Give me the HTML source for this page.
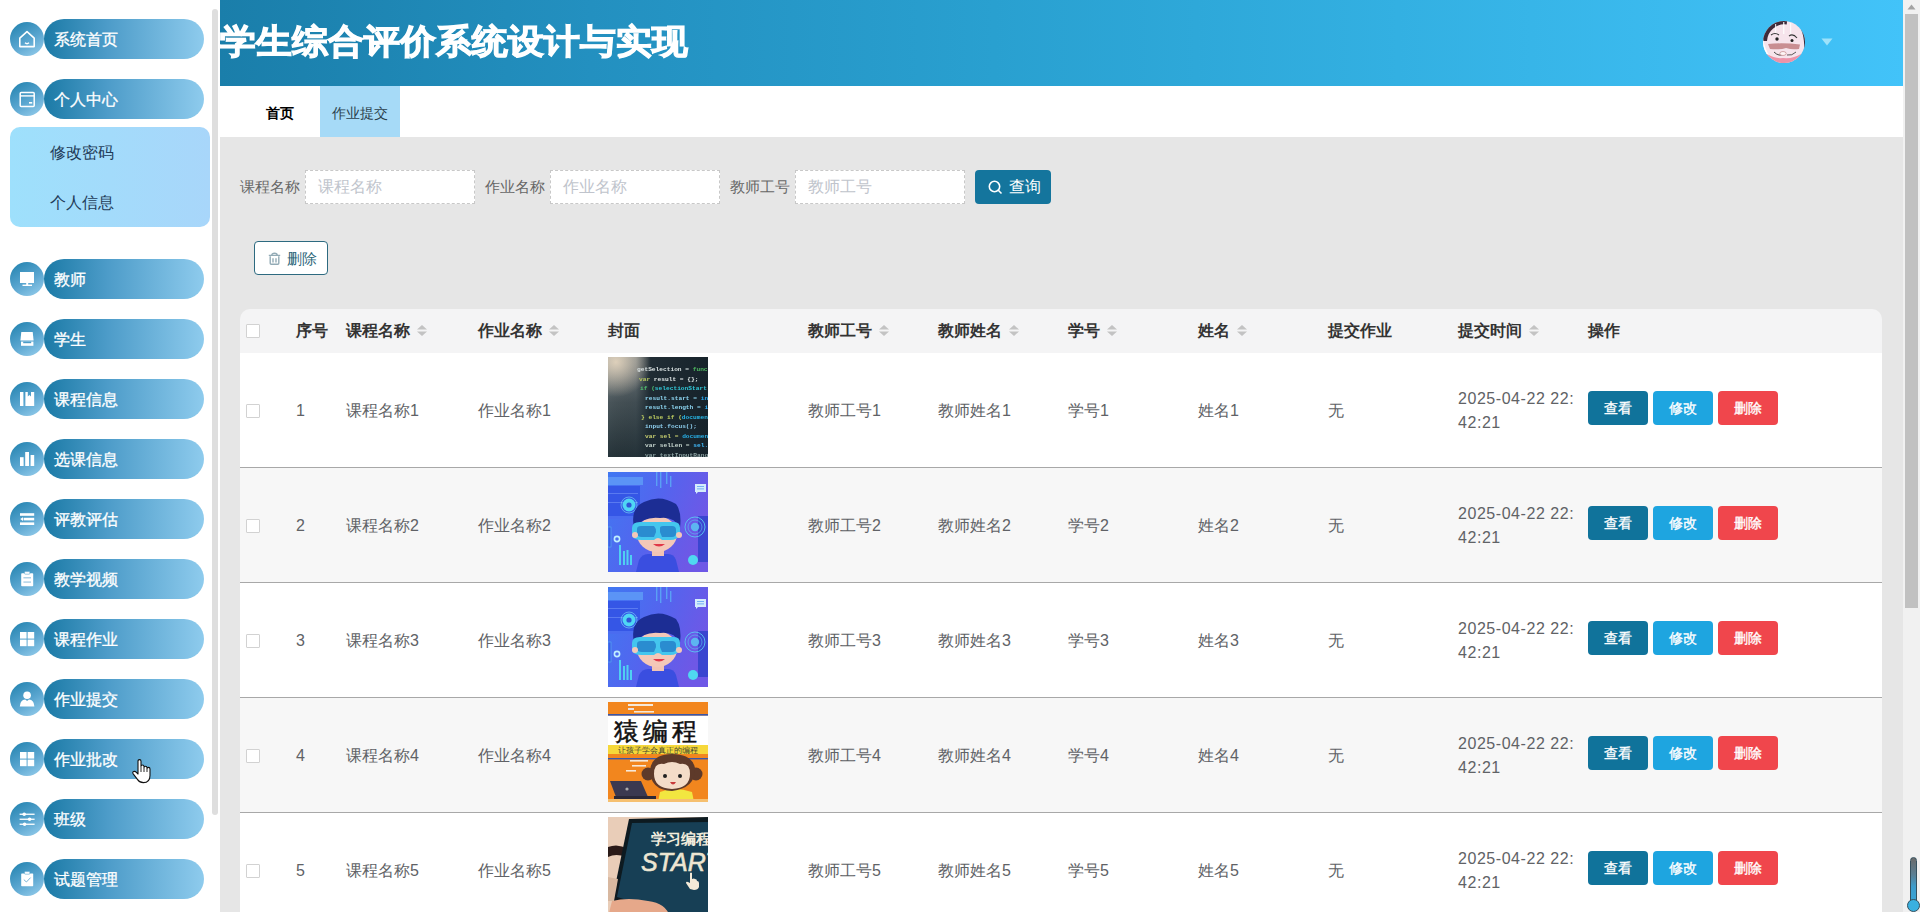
<!DOCTYPE html>
<html><head><meta charset="utf-8">
<style>
*{margin:0;padding:0;box-sizing:border-box;}
html,body{width:1920px;height:912px;overflow:hidden;background:#fff;font-family:"Liberation Sans",sans-serif;}
.abs{position:absolute;}
#side{position:absolute;left:0;top:0;width:220px;height:912px;background:#fff;}
.sb{position:absolute;left:212px;top:9px;width:6px;height:806px;background:#dedede;border-radius:3px;}
.mi{position:absolute;left:0;width:210px;height:40px;}
.mi .ic{position:absolute;left:10px;top:3px;width:34px;height:34px;border-radius:50%;background:linear-gradient(150deg,#1f80ad 0%,#5aa6d0 55%,#9ad0ee 100%);}
.mi .pl{position:absolute;left:44px;top:0;width:160px;height:40px;border-radius:20px;background:linear-gradient(90deg,#1b7aa6 0%,#4d9cc9 40%,#8ecbed 100%);color:#fff;font-size:16px;line-height:40px;padding-left:10px;padding-top:1px;-webkit-text-stroke:0.3px #fff;}
.mi .ic svg{position:absolute;left:0;top:0;}
#sub{position:absolute;left:10px;top:127px;width:200px;height:100px;border-radius:10px;background:linear-gradient(90deg,#9ee0fc,#a8d6fa);}
#sub div{position:absolute;left:40px;font-size:16px;color:#1f3b58;margin-top:2px;}
#main{position:absolute;left:220px;top:0;width:1683px;height:912px;background:#e6e6e6;}
#hdr{position:absolute;left:0;top:0;width:1683px;height:86px;background:linear-gradient(90deg,#1a7eaa 0%,#2390c0 22%,#29a0d0 46%,#33b0e2 70%,#42c3f9 100%);}
#title{position:absolute;left:0;top:17px;font-size:36px;font-weight:bold;color:#fff;letter-spacing:0px;white-space:nowrap;-webkit-text-stroke:1.2px #fff;transform:scaleY(0.95);transform-origin:0 28px;}
#tabs{position:absolute;left:0;top:86px;width:1683px;height:51px;background:#fff;}
.tab{position:absolute;top:0;height:51px;line-height:54px;overflow:hidden;font-size:14px;text-align:center;}
#pscroll{position:absolute;left:1903px;top:0;width:17px;height:912px;background:#f1f1f1;}

.lbl{position:absolute;top:170px;height:34px;line-height:34px;font-size:15px;color:#666;}
.inp{position:absolute;top:170px;width:170px;height:34px;border:1px dashed #c8c8c8;background:#fff;font-size:16px;line-height:31px;color:#c0c4cc;padding-left:12px;}
#qbtn{position:absolute;left:755px;top:170px;width:76px;height:34px;border-radius:4px;background:#14759d;color:#fff;font-size:16px;line-height:34px;}
#dbtn{position:absolute;left:34px;top:241px;width:74px;height:34px;border-radius:4px;border:1px solid #2d6a80;background:#fff;color:#2a6478;font-size:15px;line-height:32px;}
#tbl{position:absolute;left:20px;top:309px;width:1642px;height:603px;}
#thead{position:absolute;left:0;top:0;width:1642px;height:44px;background:#f4f4f5;border-radius:10px 10px 0 0;}
.th{position:absolute;top:0;line-height:44px;font-size:16px;font-weight:bold;color:#333;white-space:nowrap;}
.sort{display:inline-block;vertical-align:middle;margin-left:7px;width:10px;height:11px;position:relative;top:-1px;}
.row{position:absolute;left:0;width:1642px;height:115px;border-bottom:1px solid #a8a8a8;}
.td{position:absolute;top:1px;line-height:114px;font-size:16px;color:#606266;white-space:nowrap;}
.cb{position:absolute;left:6px;width:14px;height:14px;border:1px solid #d2d2d2;border-radius:1px;background:#fff;}
.cover{position:absolute;left:368px;top:4px;width:100px;height:100px;overflow:hidden;}
.dt{position:absolute;left:1218px;top:34px;font-size:16px;line-height:24px;color:#606266;white-space:nowrap;letter-spacing:0.55px;}
.btn{position:absolute;top:38px;width:60px;height:34px;border-radius:4px;color:#fff;font-size:14px;line-height:34px;text-align:center;-webkit-text-stroke:0.35px #fff;}
</style></head>
<body>
<div id="side">
  <div class="sb"></div>
  <div class="mi" style="top:19px"><div class="ic"><svg width="34" height="34" viewBox="0 0 34 34"><path d="M9.8 16.2 L17 9.6 L24.2 16.2 V24.6 H9.8Z" fill="none" stroke="#fff" stroke-width="1.6" stroke-linejoin="round"/><path d="M15 20.8 Q17 22.6 19 20.8" fill="none" stroke="#fff" stroke-width="1.3"/></svg></div><div class="pl">系统首页</div></div>
  <div class="mi" style="top:79px"><div class="ic"><svg width="34" height="34" viewBox="0 0 34 34"><rect x="10.2" y="10.4" width="14" height="14" rx="1" fill="none" stroke="#fff" stroke-width="1.5"/><rect x="10" y="13.2" width="14.4" height="1.4" fill="#fff"/><rect x="19" y="20" width="3.2" height="1.6" fill="#fff"/></svg></div><div class="pl">个人中心</div></div>
  <div id="sub"><div style="top:14px">修改密码</div><div style="top:64px">个人信息</div></div>
  <div class="mi" style="top:259px"><div class="ic"><svg width="34" height="34" viewBox="0 0 34 34"><rect x="10" y="10" width="14" height="11" fill="#fff"/><rect x="12.5" y="22.6" width="9.5" height="1.4" fill="#fff"/><rect x="16.2" y="21" width="2" height="2" fill="#fff"/></svg></div><div class="pl">教师</div></div>
  <div class="mi" style="top:319px"><div class="ic"><svg width="34" height="34" viewBox="0 0 34 34"><path d="M11.3 10 H22.7 L23.6 18.6 H10.4Z" fill="#fff"/><path d="M11 19.6 H23.4 V23.8 H11Z" fill="#fff"/><rect x="13.2" y="19.6" width="8" height="1.6" fill="#4a9cc8"/></svg></div><div class="pl">学生</div></div>
  <div class="mi" style="top:379px"><div class="ic"><svg width="34" height="34" viewBox="0 0 34 34"><rect x="10" y="10" width="3.4" height="14" fill="#fff"/><path d="M15.4 10 H17.8 V14.6 L19.4 13 L21 14.6 V10 H24.2 V24 H15.4Z" fill="#fff"/></svg></div><div class="pl">课程信息</div></div>
  <div class="mi" style="top:439px"><div class="ic"><svg width="34" height="34" viewBox="0 0 34 34"><rect x="10" y="15.2" width="3.6" height="8.8" fill="#fff"/><rect x="15.2" y="10" width="3.8" height="14" fill="#fff"/><rect x="20.6" y="13" width="3.6" height="11" fill="#fff"/></svg></div><div class="pl">选课信息</div></div>
  <div class="mi" style="top:499px"><div class="ic"><svg width="34" height="34" viewBox="0 0 34 34"><rect x="10" y="11.2" width="14.2" height="2.6" fill="#fff"/><rect x="13.6" y="15.8" width="10.6" height="2.6" fill="#fff"/><path d="M10.2 17.1 L13 15.2 V19Z" fill="#fff"/><rect x="10" y="20.4" width="14.2" height="2.6" fill="#fff"/></svg></div><div class="pl">评教评估</div></div>
  <div class="mi" style="top:559px"><div class="ic"><svg width="34" height="34" viewBox="0 0 34 34"><rect x="11.2" y="11.2" width="12" height="13" rx="0.8" fill="#fff"/><rect x="14.6" y="9.6" width="5.2" height="2.6" rx="0.6" fill="#fff" stroke="#5aa6d0" stroke-width="0.6"/><rect x="13.4" y="15.4" width="7.6" height="0.9" fill="#7ab4d6"/><rect x="13.4" y="19.6" width="7.6" height="0.9" fill="#7ab4d6"/></svg></div><div class="pl">教学视频</div></div>
  <div class="mi" style="top:619px"><div class="ic"><svg width="34" height="34" viewBox="0 0 34 34"><rect x="10" y="10" width="6.6" height="6.6" fill="#fff"/><rect x="17.6" y="10" width="6.6" height="6.6" fill="#fff"/><rect x="10" y="17.6" width="6.6" height="6.6" fill="#fff"/><rect x="17.6" y="17.6" width="6.6" height="6.6" fill="#fff"/></svg></div><div class="pl">课程作业</div></div>
  <div class="mi" style="top:679px"><div class="ic"><svg width="34" height="34" viewBox="0 0 34 34"><circle cx="17.1" cy="13.3" r="3.8" fill="#fff"/><path d="M9.8 24.4 Q10.2 18 15.2 17.6 L17.1 19 L19 17.6 Q24 18 24.4 24.4Z" fill="#fff"/></svg></div><div class="pl">作业提交</div></div>
  <div class="mi" style="top:739px"><div class="ic"><svg width="34" height="34" viewBox="0 0 34 34"><rect x="10" y="10" width="6.6" height="6.6" fill="#fff"/><rect x="17.6" y="10" width="6.6" height="6.6" fill="#fff"/><rect x="10" y="17.6" width="6.6" height="6.6" fill="#fff"/><rect x="17.6" y="17.6" width="6.6" height="6.6" fill="#fff"/></svg></div><div class="pl">作业批改</div></div>
  <div class="mi" style="top:799px"><div class="ic"><svg width="34" height="34" viewBox="0 0 34 34"><rect x="9.6" y="11.6" width="15" height="1.3" fill="#fff"/><rect x="9.6" y="16.6" width="15" height="1.3" fill="#fff"/><rect x="9.6" y="21.6" width="15" height="1.3" fill="#fff"/><circle cx="14.2" cy="12.2" r="1.8" fill="#fff"/><circle cx="19.6" cy="17.2" r="1.8" fill="#fff"/><circle cx="14.6" cy="22.2" r="1.8" fill="#fff"/></svg></div><div class="pl">班级</div></div>
  <div class="mi" style="top:859px"><div class="ic"><svg width="34" height="34" viewBox="0 0 34 34"><rect x="11.2" y="11.4" width="12" height="12.8" rx="0.6" fill="#fff"/><rect x="14.6" y="9.6" width="5.2" height="2.6" rx="0.6" fill="#fff" stroke="#5aa6d0" stroke-width="0.6"/><path d="M13.8 17.6 L16.4 20 L20.6 15.6" fill="none" stroke="#6aaad0" stroke-width="0.9"/></svg></div><div class="pl">试题管理</div></div>
</div>
<div id="main">
  <div id="hdr"><div id="title">学生综合评价系统设计与实现</div></div>
  <div id="tabs">
    <div class="tab" style="left:20px;width:80px;font-weight:bold;color:#000">首页</div>
    <div class="tab" style="left:100px;width:80px;background:#a6daf7;color:#2b3f4c">作业提交</div>
  </div>

  <div class="lbl" style="left:20px">课程名称</div><div class="inp" style="left:85px">课程名称</div>
  <div class="lbl" style="left:265px">作业名称</div><div class="inp" style="left:330px">作业名称</div>
  <div class="lbl" style="left:510px">教师工号</div><div class="inp" style="left:575px">教师工号</div>
  <div id="qbtn"><svg style="position:absolute;left:13px;top:10px" width="15" height="15" viewBox="0 0 15 15"><circle cx="6.5" cy="6.5" r="5.2" fill="none" stroke="#fff" stroke-width="1.6"/><path d="M10.3 10.3 L13.5 13.5" stroke="#fff" stroke-width="1.6"/></svg><span style="position:absolute;left:34px;top:0">查询</span></div>
  <div id="dbtn"><svg style="position:absolute;left:13px;top:10px" width="13" height="13" viewBox="0 0 13 13"><path d="M0.8 3.4 H12.2 M3.8 3.2 Q3.8 1.2 6.5 1.2 Q9.2 1.2 9.2 3.2 M2.2 4.2 V11.2 Q2.2 12.2 3.2 12.2 H9.8 Q10.8 12.2 10.8 11.2 V4.2 M5 6.2 V10.4 M8 6.2 V10.4" fill="none" stroke="#93abb6" stroke-width="1.4"/></svg><span style="position:absolute;left:32px;top:1px">删除</span></div>
  <div id="tbl">
    <div id="thead">
      <div class="cb" style="top:15px"></div>
      <div class="th" style="left:56px">序号</div>
      <div class="th" style="left:106px">课程名称<svg class="sort" viewBox="0 0 10 11"><path d="M5 0 L10 4.6 L0 4.6Z M5 11 L10 6.4 L0 6.4Z" fill="#c3c3c3"/></svg></div>
      <div class="th" style="left:238px">作业名称<svg class="sort" viewBox="0 0 10 11"><path d="M5 0 L10 4.6 L0 4.6Z M5 11 L10 6.4 L0 6.4Z" fill="#c3c3c3"/></svg></div>
      <div class="th" style="left:368px">封面</div>
      <div class="th" style="left:568px">教师工号<svg class="sort" viewBox="0 0 10 11"><path d="M5 0 L10 4.6 L0 4.6Z M5 11 L10 6.4 L0 6.4Z" fill="#c3c3c3"/></svg></div>
      <div class="th" style="left:698px">教师姓名<svg class="sort" viewBox="0 0 10 11"><path d="M5 0 L10 4.6 L0 4.6Z M5 11 L10 6.4 L0 6.4Z" fill="#c3c3c3"/></svg></div>
      <div class="th" style="left:828px">学号<svg class="sort" viewBox="0 0 10 11"><path d="M5 0 L10 4.6 L0 4.6Z M5 11 L10 6.4 L0 6.4Z" fill="#c3c3c3"/></svg></div>
      <div class="th" style="left:958px">姓名<svg class="sort" viewBox="0 0 10 11"><path d="M5 0 L10 4.6 L0 4.6Z M5 11 L10 6.4 L0 6.4Z" fill="#c3c3c3"/></svg></div>
      <div class="th" style="left:1088px">提交作业</div>
      <div class="th" style="left:1218px">提交时间<svg class="sort" viewBox="0 0 10 11"><path d="M5 0 L10 4.6 L0 4.6Z M5 11 L10 6.4 L0 6.4Z" fill="#c3c3c3"/></svg></div>
      <div class="th" style="left:1348px">操作</div>
    </div>
    <div class="row" style="top:44px;background:#fff">
      <div class="cb" style="top:51px"></div>
      <div class="td" style="left:56px">1</div>
      <div class="td" style="left:106px">课程名称1</div>
      <div class="td" style="left:238px">作业名称1</div>
      <div class="cover" id="cv1"><svg width="100" height="100" viewBox="0 0 100 100"><defs><linearGradient id="g1l" x1="0" y1="0" x2="0" y2="1"><stop offset="0" stop-color="#8c9294"/><stop offset="0.45" stop-color="#4a565b"/><stop offset="1" stop-color="#26343a"/></linearGradient><linearGradient id="g1h" x1="0" y1="0" x2="1" y2="0"><stop offset="0" stop-color="#000" stop-opacity="0"/><stop offset="0.28" stop-color="#1b2830" stop-opacity="0.2"/><stop offset="0.42" stop-color="#1b2830" stop-opacity="0.95"/><stop offset="1" stop-color="#17232b" stop-opacity="1"/></linearGradient><radialGradient id="g1g" cx="0.08" cy="0.05" r="0.35"><stop offset="0" stop-color="#e8d8c0" stop-opacity="0.9"/><stop offset="1" stop-color="#e8d8c0" stop-opacity="0"/></radialGradient><filter id="bl1" x="-5%" y="-5%" width="110%" height="110%"><feGaussianBlur stdDeviation="0.35"/></filter></defs><rect width="100" height="100" fill="url(#g1l)"/><rect width="100" height="100" fill="url(#g1h)"/><rect width="100" height="100" fill="url(#g1g)"/><g font-family="Liberation Mono, monospace" font-size="6.2" font-weight="bold" filter="url(#bl1)"><text x="29" y="14" fill="#d8e0e0">getSelection = <tspan fill="#4fb860">function</tspan></text><text x="31" y="23.5" fill="#dfe6e6"><tspan fill="#b8c860">var</tspan> result = {};</text><text x="32" y="33" fill="#50c070">if (<tspan fill="#30c8d8">selectionStart</tspan> in</text><text x="37" y="42.5" fill="#8fd8f4">result.start = <tspan fill="#2aa8f0">input.s</tspan></text><text x="37" y="52" fill="#8fd8f4">result.length = <tspan fill="#2aa8f0">input</tspan></text><text x="33" y="61.5" fill="#c0d060">} else if (<tspan fill="#28b8e8">document.sele</tspan></text><text x="37" y="71" fill="#8fd0f0">input.focus();</text><text x="37" y="80.5" fill="#c8d070">var sel = <tspan fill="#28b0e8">document.sel</tspan></text><text x="37" y="90" fill="#c8d8d0">var selLen = <tspan fill="#40b8f8">sel.text</tspan></text><text x="37" y="99.5" fill="#8aa0a0">var textInputRange</text></g></svg></div>
      <div class="td" style="left:568px">教师工号1</div>
      <div class="td" style="left:698px">教师姓名1</div>
      <div class="td" style="left:828px">学号1</div>
      <div class="td" style="left:958px">姓名1</div>
      <div class="td" style="left:1088px">无</div>
      <div class="dt">2025-04-22 22:<br>42:21</div>
      <div class="btn" style="left:1348px;background:#10739b">查看</div>
      <div class="btn" style="left:1413px;background:#1ea5e0">修改</div>
      <div class="btn" style="left:1478px;background:#f0464c">删除</div>
    </div>
    <div class="row" style="top:159px;background:#f7f7f7">
      <div class="cb" style="top:51px"></div>
      <div class="td" style="left:56px">2</div>
      <div class="td" style="left:106px">课程名称2</div>
      <div class="td" style="left:238px">作业名称2</div>
      <div class="cover" id="cv2"><svg width="100" height="100" viewBox="0 0 100 100"><defs><linearGradient id="b2bg" x1="0" y1="0" x2="1" y2="0.4"><stop offset="0" stop-color="#4078f2"/><stop offset="0.55" stop-color="#5464ee"/><stop offset="1" stop-color="#6e58e6"/></linearGradient></defs><rect width="100" height="100" fill="url(#b2bg)"/><rect x="0" y="5" width="35" height="8" fill="#5b94f6"/><rect x="0" y="14" width="32" height="32" fill="#3556e6"/><rect x="0" y="21" width="30" height="1" fill="#5a7af0"/><rect x="0" y="30" width="30" height="1" fill="#5a7af0"/><circle cx="21" cy="33" r="6.5" fill="#4fd6f4"/><circle cx="21" cy="33" r="2.6" fill="#2f54d8"/><circle cx="21" cy="33" r="8" fill="none" stroke="#7ae0f8" stroke-width="0.6"/><rect x="0" y="44" width="33" height="3" fill="#4a6cf0"/><rect x="0" y="55" width="3" height="20" fill="#3c5ee8" stroke="#5ab0f0" stroke-width="0.6"/><rect x="48" y="0" width="1.4" height="14" fill="#5aa0f4"/><rect x="52" y="0" width="1.4" height="16" fill="#5aa0f4"/><rect x="58" y="0" width="1.4" height="12" fill="#5aa0f4"/><rect x="62" y="4" width="1.4" height="11" fill="#5aa0f4"/><path d="M87 12 H98 V20 H90 L88 22 V20 H87Z" fill="#d4ecfc"/><rect x="89" y="14" width="7" height="0.8" fill="#5aa0f4"/><rect x="89" y="16.5" width="7" height="0.8" fill="#5aa0f4"/><rect x="90" y="44" width="10" height="46" fill="#3a46d0"/><circle cx="87" cy="55" r="10" fill="none" stroke="#5ac6f2" stroke-width="0.9"/><circle cx="87" cy="55" r="7" fill="none" stroke="#5ac6f2" stroke-width="0.6"/><circle cx="87" cy="55" r="4.2" fill="#5ac6f2" opacity="0.85"/><rect x="11" y="73" width="2" height="20" fill="#4fd0f2"/><rect x="15" y="79" width="2" height="14" fill="#4fd0f2"/><rect x="18.5" y="78" width="2" height="15" fill="#4fd0f2"/><rect x="22" y="83" width="2" height="10" fill="#4fd0f2"/><circle cx="9" cy="67" r="2.6" fill="none" stroke="#bfefff" stroke-width="1.6"/><circle cx="85" cy="88" r="5" fill="#4fd8f0"/><path d="M28 100 L31 88 Q34 82 40 82 L60 82 Q66 82 68 88 L71 100Z" fill="#3a4ee0"/><rect x="44" y="76" width="12" height="8" fill="#f2c4b4"/><ellipse cx="49" cy="62" rx="20" ry="18" fill="#f4c8b8"/><path d="M26 56 Q22 36 36 30 Q52 22 68 32 Q74 40 72 56 Q66 44 52 46 Q36 44 26 56Z" fill="#1c2d94"/><path d="M24 56 Q24 50 32 50 L66 50 Q72 50 72 56 L72 62 Q70 68 62 68 L54 68 Q50 64 46 68 L34 68 Q24 68 24 62Z" fill="#44c6ee"/><path d="M29 57 Q29 54 33 54 L46 54 Q48 56 48 60 L46 65 L34 65 Q29 65 29 61Z" fill="#2a8cd0"/><path d="M52 56 Q52 54 55 54 L64 54 Q68 54 68 58 L68 61 Q68 65 64 65 L54 65 L52 60Z" fill="#2a8cd0"/><path d="M45 72 Q51 77 57 72Z" fill="#e03848"/><circle cx="27" cy="63" r="3" fill="#f4c8b8"/><circle cx="71" cy="63" r="3" fill="#f4c8b8"/></svg></div>
      <div class="td" style="left:568px">教师工号2</div>
      <div class="td" style="left:698px">教师姓名2</div>
      <div class="td" style="left:828px">学号2</div>
      <div class="td" style="left:958px">姓名2</div>
      <div class="td" style="left:1088px">无</div>
      <div class="dt">2025-04-22 22:<br>42:21</div>
      <div class="btn" style="left:1348px;background:#10739b">查看</div>
      <div class="btn" style="left:1413px;background:#1ea5e0">修改</div>
      <div class="btn" style="left:1478px;background:#f0464c">删除</div>
    </div>
    <div class="row" style="top:274px;background:#fff">
      <div class="cb" style="top:51px"></div>
      <div class="td" style="left:56px">3</div>
      <div class="td" style="left:106px">课程名称3</div>
      <div class="td" style="left:238px">作业名称3</div>
      <div class="cover" id="cv3"><svg width="100" height="100" viewBox="0 0 100 100"><defs><linearGradient id="b3bg" x1="0" y1="0" x2="1" y2="0.4"><stop offset="0" stop-color="#4078f2"/><stop offset="0.55" stop-color="#5464ee"/><stop offset="1" stop-color="#6e58e6"/></linearGradient></defs><rect width="100" height="100" fill="url(#b3bg)"/><rect x="0" y="5" width="35" height="8" fill="#5b94f6"/><rect x="0" y="14" width="32" height="32" fill="#3556e6"/><rect x="0" y="21" width="30" height="1" fill="#5a7af0"/><rect x="0" y="30" width="30" height="1" fill="#5a7af0"/><circle cx="21" cy="33" r="6.5" fill="#4fd6f4"/><circle cx="21" cy="33" r="2.6" fill="#2f54d8"/><circle cx="21" cy="33" r="8" fill="none" stroke="#7ae0f8" stroke-width="0.6"/><rect x="0" y="44" width="33" height="3" fill="#4a6cf0"/><rect x="0" y="55" width="3" height="20" fill="#3c5ee8" stroke="#5ab0f0" stroke-width="0.6"/><rect x="48" y="0" width="1.4" height="14" fill="#5aa0f4"/><rect x="52" y="0" width="1.4" height="16" fill="#5aa0f4"/><rect x="58" y="0" width="1.4" height="12" fill="#5aa0f4"/><rect x="62" y="4" width="1.4" height="11" fill="#5aa0f4"/><path d="M87 12 H98 V20 H90 L88 22 V20 H87Z" fill="#d4ecfc"/><rect x="89" y="14" width="7" height="0.8" fill="#5aa0f4"/><rect x="89" y="16.5" width="7" height="0.8" fill="#5aa0f4"/><rect x="90" y="44" width="10" height="46" fill="#3a46d0"/><circle cx="87" cy="55" r="10" fill="none" stroke="#5ac6f2" stroke-width="0.9"/><circle cx="87" cy="55" r="7" fill="none" stroke="#5ac6f2" stroke-width="0.6"/><circle cx="87" cy="55" r="4.2" fill="#5ac6f2" opacity="0.85"/><rect x="11" y="73" width="2" height="20" fill="#4fd0f2"/><rect x="15" y="79" width="2" height="14" fill="#4fd0f2"/><rect x="18.5" y="78" width="2" height="15" fill="#4fd0f2"/><rect x="22" y="83" width="2" height="10" fill="#4fd0f2"/><circle cx="9" cy="67" r="2.6" fill="none" stroke="#bfefff" stroke-width="1.6"/><circle cx="85" cy="88" r="5" fill="#4fd8f0"/><path d="M28 100 L31 88 Q34 82 40 82 L60 82 Q66 82 68 88 L71 100Z" fill="#3a4ee0"/><rect x="44" y="76" width="12" height="8" fill="#f2c4b4"/><ellipse cx="49" cy="62" rx="20" ry="18" fill="#f4c8b8"/><path d="M26 56 Q22 36 36 30 Q52 22 68 32 Q74 40 72 56 Q66 44 52 46 Q36 44 26 56Z" fill="#1c2d94"/><path d="M24 56 Q24 50 32 50 L66 50 Q72 50 72 56 L72 62 Q70 68 62 68 L54 68 Q50 64 46 68 L34 68 Q24 68 24 62Z" fill="#44c6ee"/><path d="M29 57 Q29 54 33 54 L46 54 Q48 56 48 60 L46 65 L34 65 Q29 65 29 61Z" fill="#2a8cd0"/><path d="M52 56 Q52 54 55 54 L64 54 Q68 54 68 58 L68 61 Q68 65 64 65 L54 65 L52 60Z" fill="#2a8cd0"/><path d="M45 72 Q51 77 57 72Z" fill="#e03848"/><circle cx="27" cy="63" r="3" fill="#f4c8b8"/><circle cx="71" cy="63" r="3" fill="#f4c8b8"/></svg></div>
      <div class="td" style="left:568px">教师工号3</div>
      <div class="td" style="left:698px">教师姓名3</div>
      <div class="td" style="left:828px">学号3</div>
      <div class="td" style="left:958px">姓名3</div>
      <div class="td" style="left:1088px">无</div>
      <div class="dt">2025-04-22 22:<br>42:21</div>
      <div class="btn" style="left:1348px;background:#10739b">查看</div>
      <div class="btn" style="left:1413px;background:#1ea5e0">修改</div>
      <div class="btn" style="left:1478px;background:#f0464c">删除</div>
    </div>
    <div class="row" style="top:389px;background:#f7f7f7">
      <div class="cb" style="top:51px"></div>
      <div class="td" style="left:56px">4</div>
      <div class="td" style="left:106px">课程名称4</div>
      <div class="td" style="left:238px">作业名称4</div>
      <div class="cover" id="cv4"><svg width="100" height="100" viewBox="0 0 100 100"><rect width="100" height="100" fill="#f2861e"/><rect x="20" y="2" width="25" height="2" fill="#f6e8d8"/><rect x="20" y="6" width="6" height="2" fill="#e8e0e0"/><rect x="26" y="9" width="20" height="1.6" fill="#f6e8d8"/><rect x="0" y="12" width="100" height="1.8" fill="#3a56a8"/><rect x="0" y="13.8" width="100" height="29.2" fill="#ffffff"/><text x="6" y="37.5" font-size="24.5" fill="#111" stroke="#111" stroke-width="0.5" letter-spacing="4" font-family="Liberation Sans, sans-serif">猿编程</text><rect x="0" y="43" width="100" height="9" fill="#f6d83a"/><text x="10" y="50.5" font-size="7.6" fill="#443" font-family="Liberation Sans, sans-serif">让孩子学会真正的编程</text><rect x="0" y="56" width="100" height="1.4" fill="#3a56a8"/><rect x="22" y="58" width="18" height="1.6" fill="#f6e8d8"/><rect x="24" y="63" width="14" height="1.6" fill="#f6e8d8"/><rect x="18" y="68" width="10" height="1.6" fill="#f6e8d8"/><path d="M2 79 L33 79 L40 95 L8 95Z" fill="#3b3950"/><rect x="6" y="94" width="42" height="3" fill="#2a2838"/><circle cx="19" cy="87" r="1.6" fill="#aaa"/><path d="M50 100 L52 90 Q66 84 84 90 L86 100Z" fill="#f2e640"/><circle cx="40" cy="72" r="6.5" fill="#5e3a2a"/><circle cx="88" cy="72" r="6.5" fill="#5e3a2a"/><path d="M42 68 Q44 52 64 52 Q84 52 87 66 Q88 86 64 89 Q42 88 42 68Z" fill="#5e3a2a"/><path d="M46 72 Q46 60 56 62 Q64 58 72 62 Q82 60 82 72 Q82 86 64 87 Q46 86 46 72Z" fill="#f4dcc8"/><circle cx="57" cy="74" r="2" fill="#222"/><circle cx="72" cy="74" r="2" fill="#222"/><path d="M62 80 Q65 85 68 80Z" fill="#c83a3a"/><rect x="0" y="97" width="100" height="3" fill="#f6c070"/></svg></div>
      <div class="td" style="left:568px">教师工号4</div>
      <div class="td" style="left:698px">教师姓名4</div>
      <div class="td" style="left:828px">学号4</div>
      <div class="td" style="left:958px">姓名4</div>
      <div class="td" style="left:1088px">无</div>
      <div class="dt">2025-04-22 22:<br>42:21</div>
      <div class="btn" style="left:1348px;background:#10739b">查看</div>
      <div class="btn" style="left:1413px;background:#1ea5e0">修改</div>
      <div class="btn" style="left:1478px;background:#f0464c">删除</div>
    </div>
    <div class="row" style="top:504px;background:#fff">
      <div class="cb" style="top:51px"></div>
      <div class="td" style="left:56px">5</div>
      <div class="td" style="left:106px">课程名称5</div>
      <div class="td" style="left:238px">作业名称5</div>
      <div class="cover" id="cv5"><svg width="100" height="100" viewBox="0 0 100 100"><rect width="100" height="100" fill="#e9cdb8"/><path d="M0 30 Q10 26 20 32 L18 40 Q8 36 0 40Z" fill="#2a1a18"/><path d="M21 2 L100 0 L100 100 L60 100 L4 84Z" fill="#0d1a20"/><path d="M24 6 L100 5 L100 96 L62 96 L9 80Z" fill="#173f55"/><text x="43" y="27" font-size="15" font-weight="bold" fill="#f2ecdc" font-family="Liberation Sans, sans-serif">学习编程</text><text x="33" y="54" font-size="25" font-style="italic" fill="#ede6d2" stroke="#ede6d2" stroke-width="0.6" font-family="Liberation Sans, sans-serif" letter-spacing="0">START</text><path d="M82 56 Q83 55 84 56 L84 62 Q86 61 87 62 Q89 62 89 64 Q91 64 91 66 L91 70 Q90 73 86 73 L82 72 L78 66 Q78 64 80 65 L82 66Z" fill="#f4ead8"/><path d="M4 84 Q20 80 40 84 Q58 86 62 100 L0 100Z" fill="#e6a88a"/><path d="M0 60 L10 62 L6 84 L0 84Z" fill="#d8b8a0"/></svg></div>
      <div class="td" style="left:568px">教师工号5</div>
      <div class="td" style="left:698px">教师姓名5</div>
      <div class="td" style="left:828px">学号5</div>
      <div class="td" style="left:958px">姓名5</div>
      <div class="td" style="left:1088px">无</div>
      <div class="dt">2025-04-22 22:<br>42:21</div>
      <div class="btn" style="left:1348px;background:#10739b">查看</div>
      <div class="btn" style="left:1413px;background:#1ea5e0">修改</div>
      <div class="btn" style="left:1478px;background:#f0464c">删除</div>
    </div>
  </div>
</div>
<div id="pscroll"><svg style="position:absolute;left:4px;top:4px" width="9" height="6" viewBox="0 0 9 6"><path d="M4.5 0.5 L8.5 5.5 H0.5Z" fill="#a3a3a3"/></svg><div style="position:absolute;left:2px;top:14px;width:13px;height:594px;background:#c1c1c1;"></div>
<div style="position:absolute;left:7px;top:857px;width:7px;height:50px;background:linear-gradient(#6a6a6a 0%,#5a7f94 35%,#3c9ccc 60%,#38a6d8 100%);border:1.2px solid #34505e;border-radius:3.5px;"></div><div style="position:absolute;left:4px;top:899px;width:13px;height:13px;border-radius:50%;background:#3ab0e0;border:1.4px solid #34505e;"></div></div>

<div id="avatar" style="position:absolute;left:1763px;top:21px;width:42px;height:42px;border-radius:50%;overflow:hidden;"><svg width="42" height="42" viewBox="0 0 42 42"><rect width="42" height="42" fill="#f6e4ec"/><path d="M1.5 20 A20 20 0 0 1 24 1" fill="none" stroke="#3e2a3a" stroke-width="5"/><path d="M38 8 Q43 20 40 36 L42 36 V8Z" fill="#2a2436"/><path d="M0 18 Q2 28 6 34 L0 34Z" fill="#ffffff"/><rect x="12" y="3" width="1.2" height="10" fill="#fff" opacity="0.8"/><rect x="20" y="1" width="1.4" height="12" fill="#fff" opacity="0.8"/><rect x="27" y="2" width="1.2" height="11" fill="#fff" opacity="0.8"/><path d="M8 14 Q12 11 16 14" fill="none" stroke="#3a3a3a" stroke-width="1.1"/><path d="M26 15 Q30 12 34 17" fill="none" stroke="#3a3a3a" stroke-width="1.1"/><circle cx="14" cy="18" r="1.7" fill="#222"/><circle cx="29" cy="19.5" r="1.5" fill="#222"/><path d="M5 23 Q20 21.5 37 23.5 L36 28 Q29 29 23 27 Q17 29 7 28Z" fill="#c98e92"/><path d="M11 31 Q16 36 21 33" fill="none" stroke="#333" stroke-width="0.9"/><path d="M24 34 Q29 35 33 31" fill="none" stroke="#333" stroke-width="0.8"/><ellipse cx="20" cy="32.5" rx="3.2" ry="2" fill="#fdf6f6" stroke="#b77" stroke-width="0.6"/><path d="M4 33 Q12 38 20 37 Q30 38 38 33 L42 42 H0Z" fill="#ec93a8"/></svg></div>
<svg style="position:absolute;left:1821px;top:38px" width="12" height="8" viewBox="0 0 12 8"><path d="M0.5 0.5 H11.5 L6 7.5Z" fill="#9ee2fa"/></svg>
<svg style="position:absolute;left:132px;top:759px" width="19" height="25" viewBox="0 0 19 25"><path d="M6 2.2 Q6 0.6 7.5 0.6 Q9 0.6 9 2.2 V7.5 Q9.2 6 10.5 6 Q12 6 12 7.6 V8.6 Q12.2 7.2 13.5 7.2 Q15 7.2 15 8.8 V9.6 Q15.2 8.4 16.5 8.4 Q18 8.4 18 10 V16.5 Q18 23.6 11.4 23.6 Q7.6 23.6 5.6 20.6 L1.2 14.8 Q0.2 13.2 1.6 12.6 Q3 12 4.4 13.4 L6 15Z" fill="#fff" stroke="#111" stroke-width="1.1" stroke-linejoin="round"/><path d="M9 8 V13 M12 9 V13 M15 10 V13" stroke="#111" stroke-width="0.9"/></svg>

</body></html>
